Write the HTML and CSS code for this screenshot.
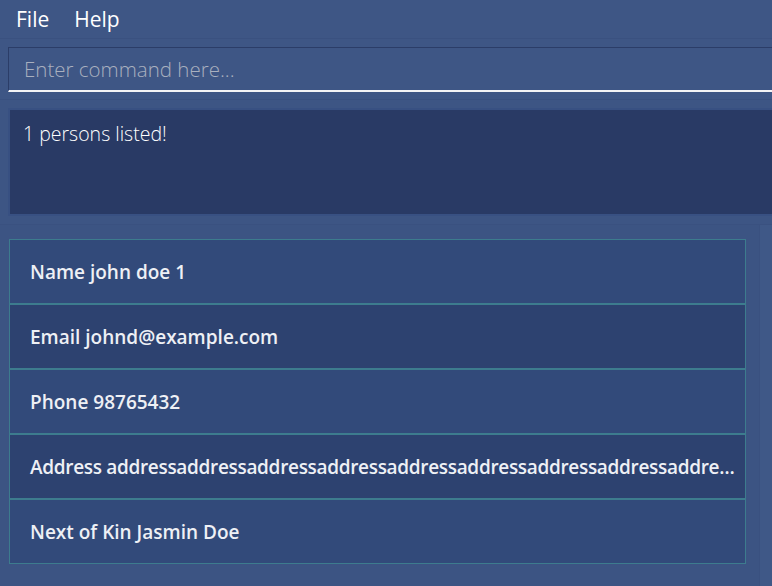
FILE: index.html
```html
<!DOCTYPE html>
<html>
<head>
<meta charset="utf-8">
<link rel="stylesheet" href="styles.css">
</head>
<body>
<div class="app">
  <div class="menubar">
    <span class="menu-item">File</span>
    <span class="menu-item">Help</span>
  </div>
  <div class="command-area">
    <div class="command-box">
      <input class="command-input" type="text" placeholder="Enter command here...">
    </div>
  </div>
  <div class="result-area">
    <div class="result-box">1 persons listed!</div>
  </div>
  <div class="list-area">
    <div class="list-panel">
      <div class="card">
        <div class="row row-odd">Name john doe 1</div>
        <div class="row row-even">Email johnd@example.com</div>
        <div class="row row-odd">Phone 98765432</div>
        <div class="row row-even row-tight">Address addressaddressaddressaddressaddressaddressaddressaddressaddre…</div>
        <div class="row row-odd">Next of Kin Jasmin Doe</div>
      </div>
    </div>
    <div class="scroll-strip"></div>
  </div>
</div>
</body>
</html>
```
FILE: styles.css
```css
html, body {
  margin: 0;
  padding: 0;
  background: #3e5685;
  overflow: hidden;
}
.app {
  width: 772px;
  height: 586px;
  display: flex;
  flex-direction: column;
  font-family: "Open Sans", "Noto Sans", sans-serif;
  color: #ffffff;
  overflow: hidden;
}
.menubar {
  height: 39px;
  display: flex;
  align-items: center;
  gap: 25px;
  padding-left: 16px;
  border-bottom: 1px solid #3a5180;
  box-sizing: border-box;
}
.menu-item {
  font-size: 21px;
  color: #ffffff;
}
.command-area {
  padding: 8px 0 0 8px;
  height: 61px;
  box-sizing: border-box;
  border-bottom: 1px solid #3a5180;
}
.command-box {
  width: 800px;
  height: 45px;
  box-sizing: border-box;
  border-top: 1px solid #2b3d68;
  border-left: 1px solid #2b3d68;
  border-bottom: 2px solid #f4f4f6;
  background: #3e5685;
}
.command-input {
  width: 100%;
  height: 100%;
  box-sizing: border-box;
  border: none;
  outline: none;
  background: transparent;
  padding: 0 0 0 15px;
  font-family: "Open Sans", "Noto Sans", sans-serif;
  font-weight: 300;
  font-size: 20.5px;
  color: #ffffff;
}
.command-input::placeholder {
  color: #a9b0bf;
}
.result-area {
  padding: 8px 0 8px 8px;
  height: 125px;
  box-sizing: border-box;
  background: #3d5584;
  border-bottom: 1px solid #3a5180;
}
.result-box {
  width: 800px;
  height: 108px;
  box-sizing: border-box;
  border: 2px solid #385082;
  background: #293a65;
  padding: 10px 0 0 13px;
  font-size: 19.5px;
  font-weight: 300;
  color: #ffffff;
}
.list-area {
  flex: 1;
  display: flex;
  background: #3c5483;
}
.list-panel {
  width: 760px;
  padding: 14px 0 0 9px;
  box-sizing: border-box;
  border-right: 1px solid #3a5180;
}
.scroll-strip {
  flex: 1;
  background: #3f5887;
}
.card {
  width: 737px;
  border: 1px solid #3d7c8e;
  box-sizing: border-box;
}
.row {
  height: 65px;
  box-sizing: border-box;
  padding: 0 0 0 20px;
  display: flex;
  align-items: center;
  font-size: 19px;
  font-weight: 600;
  color: #eef0f5;
  border-top: 2px solid #3d7c8e;
  white-space: nowrap;
  overflow: hidden;
}
.row:first-child {
  border-top: none;
  height: 63px;
}
.row-tight {
  letter-spacing: -0.32px;
}
.row-odd {
  background: #324a7a;
}
.row-even {
  background: #2d4270;
}
```
